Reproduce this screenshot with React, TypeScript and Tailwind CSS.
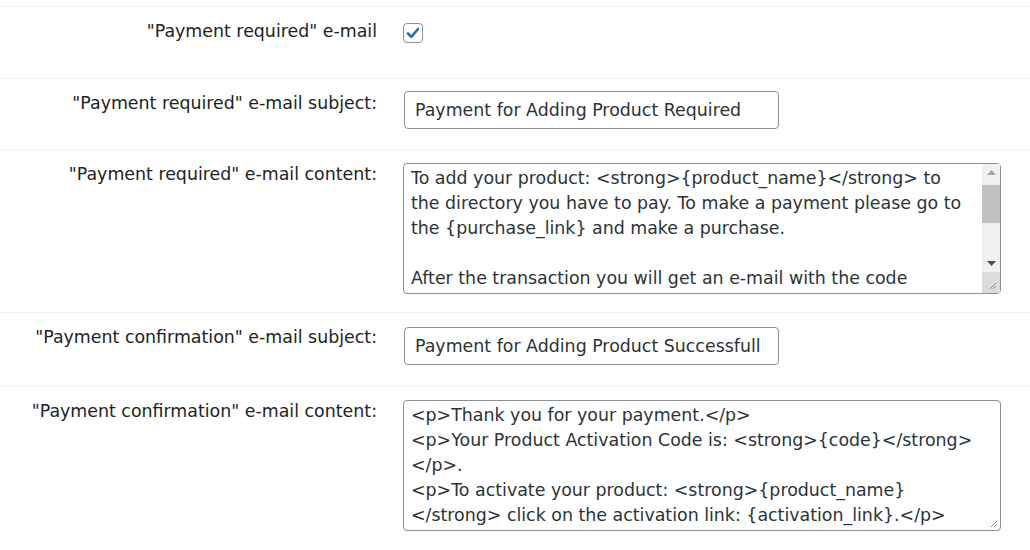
import React from "react";

const font = "font-['DejaVu_Sans',Verdana,sans-serif]";

const requiredContent =
  "To add your product: <strong>{product_name}</strong> to\nthe directory you have to pay. To make a payment please go to\nthe {purchase_link} and make a purchase.\n\nAfter the transaction you will get an e-mail with the code";

const confirmationContent =
  "<p>Thank you for your payment.</p>\n<p>Your Product Activation Code is: <strong>{code}</strong>\n</p>.\n<p>To activate your product: <strong>{product_name}\n</strong> click on the activation link: {activation_link}.</p>";

function Label({ children }: { children: React.ReactNode }) {
  return (
    <div className="w-[390px] shrink-0 pt-[12px] pr-[13px] text-right text-[17.4px] leading-[24px] text-[#1d2327]">
      {children}
    </div>
  );
}

function Resizer() {
  return (
    <svg className="pointer-events-none absolute bottom-[3px] right-[3px]" width="9" height="9" viewBox="0 0 9 9">
      <path d="M8 2 L2 8 M8 5 L5 8" stroke="#8a8a8a" strokeWidth="1" />
    </svg>
  );
}

function Scrollbar() {
  return (
    <div className="pointer-events-none absolute right-[1px] top-[1px] bottom-[1px] flex w-[18px] flex-col bg-[#f1f1f1]">
      <div className="flex h-[17px] items-center justify-center">
        <svg width="9" height="5" viewBox="0 0 9 5">
          <path d="M0 5 L4.5 0 L9 5 Z" fill="#a3a3a3" />
        </svg>
      </div>
      <div className="mt-[4px] h-[38px] bg-[#c1c1c1]" />
      <div className="flex-1" />
      <div className="flex h-[17px] items-center justify-center">
        <svg width="9" height="5" viewBox="0 0 9 5">
          <path d="M0 0 L9 0 L4.5 5 Z" fill="#505050" />
        </svg>
      </div>
      <div className="relative h-[21px] bg-[#dcdcdc]">
        <Resizer />
      </div>
    </div>
  );
}

function TextBox({ value }: { value: string }) {
  return (
    <input
      type="text"
      readOnly
      defaultValue={value}
      className={`h-[38px] w-[375px] rounded-[4px] border border-[#8c8f94] bg-white px-[10px] text-[17.4px] text-[#2c3338] outline-none ${font}`}
    />
  );
}

function Area({ value, scroll }: { value: string; scroll?: boolean }) {
  return (
    <div className="relative h-[131px] w-[598px]">
      <textarea
        readOnly
        wrap="off"
        defaultValue={value}
        className={`h-full w-full resize-none overflow-hidden rounded-[4px] border border-[#8c8f94] bg-white pl-[7px] pr-[24px] pt-[2px] text-[17.4px] leading-[25px] text-[#2c3338] outline-none ${font}`}
      />
      {scroll ? <Scrollbar /> : <Resizer />}
    </div>
  );
}

export default function App() {
  return (
    <div className={`h-[550px] w-[1030px] overflow-hidden bg-white ${font}`}>
      <div className="h-[6px]" />
      <div className="flex h-[72px] border-t border-[#f0f0f1]">
        <Label>"Payment required" e-mail</Label>
        <div className="pl-[13px] pt-[16px]">
          <span className="flex h-[20px] w-[20px] items-center justify-center rounded-[4px] border border-[#8c8f94] bg-white">
            <svg width="14" height="12" viewBox="0 0 14 12">
              <path d="M2 6.5 L5.3 9.8 L12 2" fill="none" stroke="#2271b1" strokeWidth="2.6" strokeLinecap="round" strokeLinejoin="round" />
            </svg>
          </span>
        </div>
      </div>
      <div className="flex h-[71px] border-t border-[#f0f0f1]">
        <Label>"Payment required" e-mail subject:</Label>
        <div className="pl-[14px] pt-[12px]">
          <TextBox value="Payment for Adding Product Required" />
        </div>
      </div>
      <div className="flex h-[163px] border-t border-[#f0f0f1]">
        <Label>"Payment required" e-mail content:</Label>
        <div className="pl-[13px] pt-[13px]">
          <Area value={requiredContent} scroll />
        </div>
      </div>
      <div className="flex h-[74px] border-t border-[#f0f0f1]">
        <Label>"Payment confirmation" e-mail subject:</Label>
        <div className="pl-[14px] pt-[14px]">
          <TextBox value="Payment for Adding Product Successfull" />
        </div>
      </div>
      <div className="flex h-[164px] border-t border-[#f0f0f1]">
        <Label>"Payment confirmation" e-mail content:</Label>
        <div className="pl-[13px] pt-[13px]">
          <Area value={confirmationContent} />
        </div>
      </div>
    </div>
  );
}
